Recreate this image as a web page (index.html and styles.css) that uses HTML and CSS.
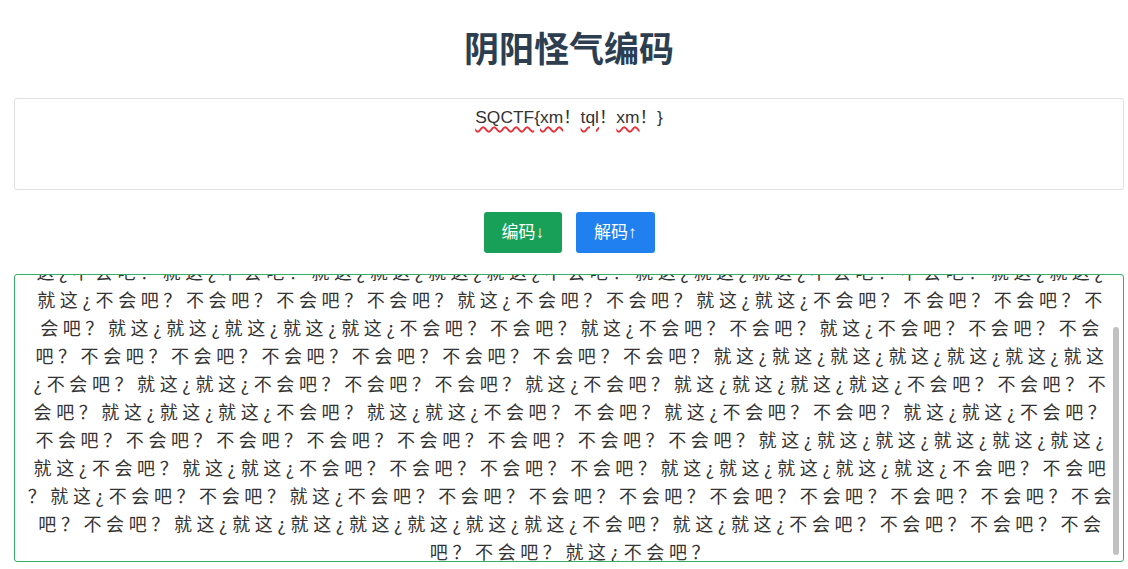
FILE: index.html
```html
<!DOCTYPE html>
<html lang="zh-CN">
<head>
<meta charset="utf-8">
<title>阴阳怪气编码</title>
<link rel="stylesheet" href="styles.css">
</head>
<body>
<div class="app">
  <h1 class="title">阴阳怪气编码</h1>
  <div class="field">
    <textarea class="input" spellcheck="false">SQCTF{xm！tql！xm！}</textarea>
    <div class="spell" aria-hidden="true"><span class="typo">SQCTF</span>{<span class="typo">xm</span>！<span class="typo">tql</span>！<span class="typo">xm</span>！}</div>
  </div>
  <div class="actions">
    <button class="btn btn-encode">编码↓</button>
    <button class="btn btn-decode">解码↑</button>
  </div>
  <div class="field">
    <textarea class="output" spellcheck="false">不会吧？不会吧？就这¿不会吧？就这¿就这¿不会吧？不会吧？不会吧？不会吧？就这¿就这¿就这¿不会吧？不会吧
？就这¿不会吧？不会吧？就这¿不会吧？就这¿就这¿不会吧？就这¿不会吧？不会吧？不会吧？就这¿不会吧？就
这¿不会吧？就这¿不会吧？就这¿就这¿就这¿就这¿不会吧？就这¿就这¿就这¿不会吧？不会吧？就这¿就这¿
就这¿不会吧？不会吧？不会吧？不会吧？就这¿不会吧？不会吧？就这¿就这¿不会吧？不会吧？不会吧？不
会吧？就这¿就这¿就这¿就这¿就这¿不会吧？不会吧？就这¿不会吧？不会吧？就这¿不会吧？不会吧？不会
吧？不会吧？不会吧？不会吧？不会吧？不会吧？不会吧？不会吧？就这¿就这¿就这¿就这¿就这¿就这¿就这
¿不会吧？就这¿就这¿不会吧？不会吧？不会吧？就这¿不会吧？就这¿就这¿就这¿就这¿不会吧？不会吧？不
会吧？就这¿就这¿就这¿不会吧？就这¿就这¿不会吧？不会吧？就这¿不会吧？不会吧？就这¿就这¿不会吧？
不会吧？不会吧？不会吧？不会吧？不会吧？不会吧？不会吧？不会吧？就这¿就这¿就这¿就这¿就这¿就这¿
就这¿不会吧？就这¿就这¿不会吧？不会吧？不会吧？不会吧？就这¿就这¿就这¿就这¿就这¿不会吧？不会吧
？就这¿不会吧？不会吧？就这¿不会吧？不会吧？不会吧？不会吧？不会吧？不会吧？不会吧？不会吧？不会
吧？不会吧？就这¿就这¿就这¿就这¿就这¿就这¿就这¿不会吧？就这¿就这¿不会吧？不会吧？不会吧？不会
吧？不会吧？就这¿不会吧？</textarea>
    <div class="thumb" aria-hidden="true"></div>
  </div>
</div>
<script src="script.js"></script>
</body>
</html>
```

FILE: styles.css
```css
html, body {
  margin: 0;
  background: #ffffff;
}

body {
  font-family: "Liberation Sans", "Noto Sans CJK SC", sans-serif;
}

.app {
  display: flex;
  flex-direction: column;
  padding: 26px 4px 0 14px;
}

.title {
  margin: 0 0 30px;
  text-align: center;
  font-family: "Noto Sans CJK SC", sans-serif;
  font-size: 35px;
  line-height: 42px;
  font-weight: 700;
  color: #2c3e50;
}

.field {
  position: relative;
  display: flex;
  flex-direction: column;
}

.input {
  box-sizing: border-box;
  height: 92px;
  margin: 0;
  padding: 4px 8px;
  border: 1px solid #e0e0e6;
  border-radius: 3px;
  resize: none;
  outline: none;
  text-align: center;
  font-family: "Liberation Sans", "Noto Sans CJK SC", sans-serif;
  font-size: 17.4px;
  line-height: 28px;
  color: #333333;
  background: #ffffff;
}

.spell {
  position: absolute;
  top: 1px;
  left: 1px;
  right: 1px;
  padding: 4px 8px;
  text-align: center;
  font-family: "Liberation Sans", "Noto Sans CJK SC", sans-serif;
  font-size: 17.4px;
  line-height: 28px;
  color: transparent;
  pointer-events: none;
  white-space: pre-wrap;
}

.typo {
  text-decoration: underline wavy #e8303a;
  text-decoration-thickness: 1.5px;
  text-underline-offset: 3px;
}

.actions {
  display: flex;
  justify-content: center;
  gap: 14px;
  margin: 22px 0 21px;
}

.btn {
  height: 41px;
  padding: 0 18px;
  border: 0;
  border-radius: 3px;
  color: #ffffff;
  font-family: "Liberation Sans", "Noto Sans CJK SC", sans-serif;
  font-size: 17px;
  line-height: 41px;
  cursor: pointer;
}

.btn-encode {
  background: #18a058;
}

.btn-decode {
  background: #2080f0;
}

.output {
  box-sizing: border-box;
  height: 288px;
  margin: 0;
  padding: 4px 1px 4px 7px;
  border: 1px solid #36ad6a;
  border-radius: 3px;
  resize: none;
  outline: none;
  text-align: center;
  white-space: pre;
  overflow: hidden;
  font-family: "Noto Sans CJK SC", sans-serif;
  font-size: 18px;
  line-height: 28px;
  letter-spacing: 4.6px;
  color: #333333;
  background: #ffffff;
}

.thumb {
  position: absolute;
  top: 53px;
  right: 5px;
  width: 6px;
  height: 228px;
  border-radius: 3px;
  background: #c1c1c1;
  pointer-events: none;
}
```

FILE: script.js
```js
document.querySelector('.output').scrollTop = 78;
```
